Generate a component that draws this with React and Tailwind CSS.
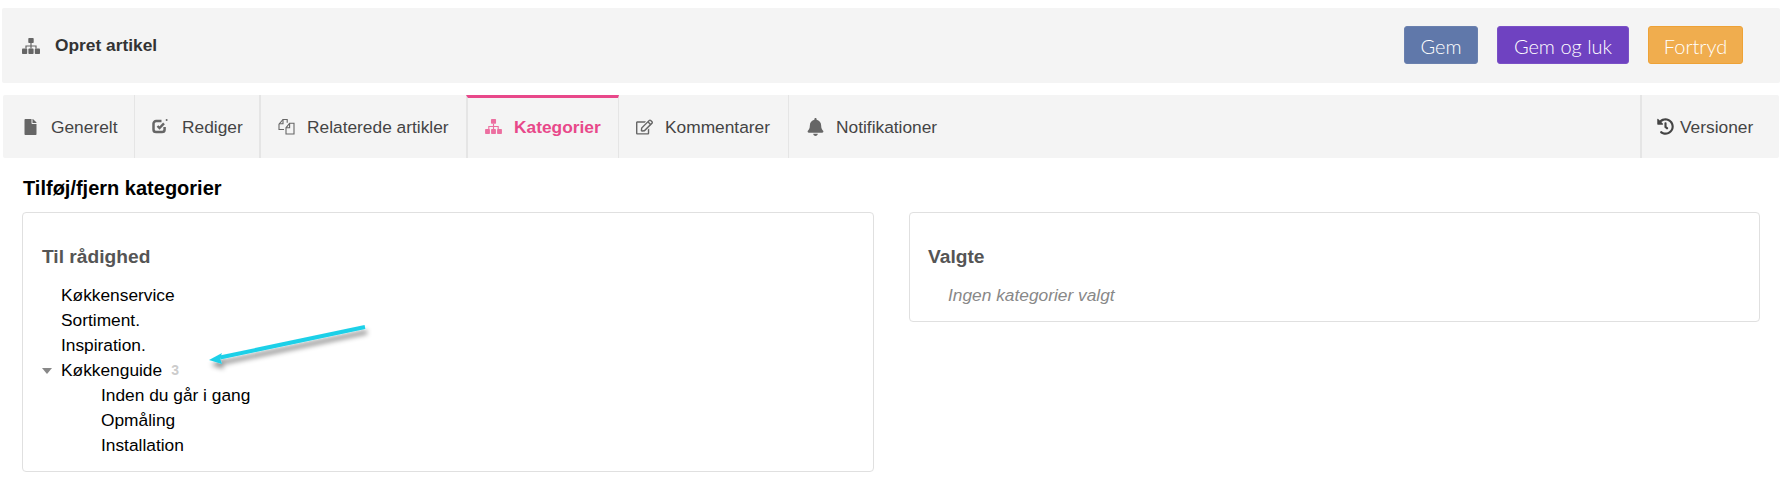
import React from "react";
import { FaFile, FaBell, FaHistory, FaRegEdit } from "react-icons/fa";

const sans = { fontFamily: '"Liberation Sans", Arial, sans-serif' };

function Sitemap({ className }) {
  return (
    <svg viewBox="0 0 18 16" className={className} fill="currentColor">
      <rect x="6.3" y="0" width="5.4" height="5" rx="0.8" />
      <rect x="0" y="10.6" width="5.2" height="5.4" rx="0.8" />
      <rect x="6.4" y="10.6" width="5.2" height="5.4" rx="0.8" />
      <rect x="12.8" y="10.6" width="5.2" height="5.4" rx="0.8" />
      <path d="M8.4 5h1.2v2.4h5v3.2h-1.2V8.6H9.6v2h-1.2v-2H4.6v2H3.4V7.4h5z" />
    </svg>
  );
}

function CheckSquare({ className }) {
  return (
    <svg viewBox="0 0 16 16" className={className} fill="none" stroke="currentColor">
      <path d="M12.6 9v2.4a2.6 2.6 0 0 1-2.6 2.6H4.1a2.6 2.6 0 0 1-2.6-2.6V5.6A2.6 2.6 0 0 1 4.1 3h5.4" strokeWidth="2.5" />
      <path d="M5.5 8 7.5 10 12 5.3" strokeWidth="2.4" />
      <circle cx="14.6" cy="2" r="1" fill="currentColor" stroke="none" />
    </svg>
  );
}

function Files({ className }) {
  return (
    <svg viewBox="0 0 17 17" className={className} fill="none" stroke="currentColor" strokeWidth="1.1">
      <path d="M6 11.5H1V6.2L5 1.5h4.2v3.2" />
      <path d="M5 1.5v4.2H1" />
      <path d="M8 16V9.8l3.6-4.6H16V16z" fill="#f4f4f4" />
      <path d="M11.6 5.2v4.6H8" />
    </svg>
  );
}

function Tab({ icon, label, className = "", labelClass = "mt-[2px]" }) {
  return (
    <div className={`flex items-center h-full text-[#444] ${className}`}>
      <span className="text-[#666] flex">{icon}</span>
      <span className={labelClass}>{label}</span>
    </div>
  );
}

function Btn({ children, className }) {
  return (
    <div
      className={`h-[38px] flex items-center justify-center rounded-[3px] text-white text-[20px] font-light ${className}`}
      style={{ fontFamily: 'Lato, sans-serif' }}
    >
      <span className="mt-[2px]">{children}</span>
    </div>
  );
}

export default function App() {
  return (
    <div className="relative w-[1790px] h-[502px] bg-white text-[17.33px] overflow-hidden" style={sans}>
      <div className="pt-2 pl-[2px] pr-[10px]">
        <div className="h-[75px] bg-[#f4f4f4] rounded-[2px] flex items-center pl-[20px] pr-[37px]">
          <Sitemap className="w-[18px] h-[16px] text-[#666]" />
          <span className="ml-[15px] font-bold text-[#333] mt-[1px]">Opret artikel</span>
          <div className="ml-auto flex gap-[19px] -mt-[1px]">
            <Btn className="w-[74px] bg-[#6078aa] border border-[#6a80ae]">Gem</Btn>
            <Btn className="w-[132px] bg-[#6f42c1] border border-[#7a50c6]">Gem og luk</Btn>
            <Btn className="w-[95px] bg-[#f0ad4e] border border-[#eea236]">Fortryd</Btn>
          </div>
        </div>
      </div>

      <div className="mt-3 ml-[3px] mr-[11px] h-[63px] bg-[#f4f4f4] rounded-[2px] flex">
        <Tab className="w-[132px] pl-[21px] gap-[14px] border-r border-[#e5e5e5]" icon={<FaFile className="w-[13px] h-[16px]" />} label="Generelt" />
        <Tab className="w-[126px] pl-[17px] gap-[14px] border-r-2 border-[#e5e5e5]" icon={<CheckSquare className="w-[16px] h-[16px] -mt-[2px]" />} label="Rediger" labelClass="mt-[3px]" />
        <Tab className="w-[205px] pl-[17px] gap-[12px]" icon={<Files className="w-[17px] h-[17px]" />} label="Relaterede artikler" />
        <div className="w-[153px] h-full border-t-[3px] border-t-[#e8488a] border-l-2 border-l-[#e5e5e5] border-r border-r-[#e5e5e5] flex items-center pl-[17px] gap-[12px] pb-[3px]">
          <Sitemap className="w-[17px] h-[15px] text-[#ec6fa0]" />
          <span className="font-bold text-[#e8488a] mt-[2px]">Kategorier</span>
        </div>
        <Tab className="w-[170px] pl-[17px] gap-[12px] border-r border-[#e5e5e5]" icon={<FaRegEdit className="w-[17px] h-[16px]" />} label="Kommentarer" />
        <Tab className="pl-[18px] gap-[12px]" icon={<FaBell className="w-[17px] h-[18px]" />} label="Notifikationer" />
        <div className="ml-auto w-[139px] h-full border-l-2 border-[#e5e5e5] flex items-center pl-[15px] gap-[6px] text-[#444]">
          <FaHistory className="w-[17px] h-[17px] text-[#444]" />
          <span className="mt-[2px]">Versioner</span>
        </div>
      </div>

      <div className="mt-[20px] ml-[23px] font-bold text-[20px] leading-[20px] text-black">Tilføj/fjern kategorier</div>

      <div className="mt-[14px] ml-[22px] flex items-start gap-[35px]">
        <div className="w-[852px] h-[260px] border border-[#e0e0e0] rounded-[4px] pt-[34px] pl-[19px]">
          <div className="font-bold text-[19.2px] leading-[20px] text-[#555]">Til rådighed</div>
          <div className="mt-[16px] pl-[19px] leading-[25px] text-black">
            <div>Køkkenservice</div>
            <div>Sortiment.</div>
            <div>Inspiration.</div>
            <div className="relative flex items-center">
              <span className="absolute -left-[19px] top-[10px] w-0 h-0 border-l-[5px] border-r-[5px] border-t-[6px] border-l-transparent border-r-transparent border-t-[#888]" />
              <span>Køkkenguide</span>
              <span className="ml-[9px] text-[14px] font-bold text-[#ccc]">3</span>
            </div>
            <div className="pl-[40px]">
              <div>Inden du går i gang</div>
              <div>Opmåling</div>
              <div>Installation</div>
            </div>
          </div>
        </div>
        <div className="w-[851px] h-[110px] border border-[#e0e0e0] rounded-[4px] pt-[34px] pl-[18px]">
          <div className="font-bold text-[19.2px] leading-[20px] text-[#555]">Valgte</div>
          <div className="mt-[16px] pl-[20px] leading-[25px] italic text-[#888]">Ingen kategorier valgt</div>
        </div>
      </div>

      <svg className="absolute left-[200px] top-[315px] pointer-events-none" width="180" height="60" viewBox="0 0 180 60">
        <defs>
          <filter id="arrowShadow" x="-20%" y="-50%" width="140%" height="250%">
            <feDropShadow dx="2" dy="5" stdDeviation="2.5" floodColor="#000" floodOpacity="0.45" />
          </filter>
        </defs>
        <g filter="url(#arrowShadow)">
          <path d="M165 12 20 42.5" stroke="#1ed0e8" strokeWidth="4" fill="none" />
          <path d="M9 45 22 38 20 43 22 49Z" fill="#1ed0e8" />
        </g>
      </svg>
    </div>
  );
}
